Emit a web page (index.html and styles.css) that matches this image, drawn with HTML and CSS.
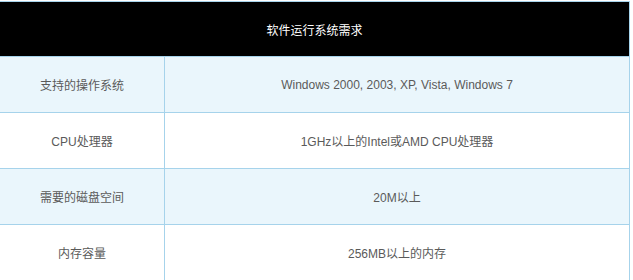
FILE: index.html
```html
<!DOCTYPE html>
<html lang="zh-CN">
<head>
<meta charset="utf-8">
<title>软件运行系统需求</title>
<link rel="stylesheet" href="styles.css">
</head>
<body>
<div class="wrap">
  <table class="req">
    <colgroup><col class="ck"><col class="cv"></colgroup>
    <thead>
      <tr><th colspan="2">软件运行系统需求</th></tr>
    </thead>
    <tbody>
      <tr class="alt"><td>支持的操作系统</td><td>Windows 2000, 2003, XP, Vista, Windows 7</td></tr>
      <tr><td>CPU处理器</td><td>1GHz以上的Intel或AMD CPU处理器</td></tr>
      <tr class="alt"><td>需要的磁盘空间</td><td>20M以上</td></tr>
      <tr><td>内存容量</td><td>256MB以上的内存</td></tr>
    </tbody>
  </table>
</div>
</body>
</html>
```

FILE: styles.css
```css
html, body {
  margin: 0;
  padding: 0;
  background: #ffffff;
}
.wrap {
  padding-top: 1px;
}
.req {
  margin-left: -1px;
  width: 631px;
  border-collapse: collapse;
  border: 1px solid #a6d3eb;
  font-family: "Liberation Sans", Arial, "Noto Sans CJK SC", sans-serif;
  font-size: 12px;
  color: #5a5a5a;
  table-layout: fixed;
}
.req col.ck {
  width: 165px;
}
.req th {
  background: #000000;
  color: #ffffff;
  font-weight: normal;
  height: 54px;
  padding: 0;
  text-align: center;
  border: 1px solid #a6d3eb;
}
.req td {
  height: 55px;
  padding: 0;
  text-align: center;
  vertical-align: middle;
  border: 1px solid #a6d3eb;
}
.req tr.alt td {
  background: #eaf6fc;
}
```
